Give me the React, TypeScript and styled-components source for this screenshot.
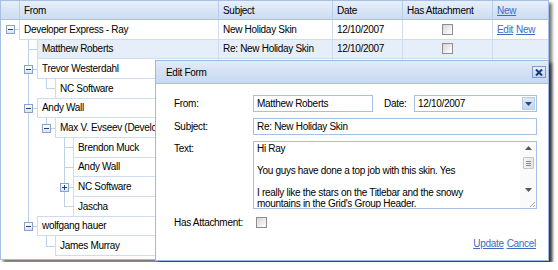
import React from "react";
import styled, { createGlobalStyle } from "styled-components";

const GlobalStyle = createGlobalStyle`
  html, body {
    margin: 0;
    padding: 0;
    background: #fff;
  }
  body {
    font-family: "Liberation Sans", Arial, sans-serif;
    font-size: 10px;
    letter-spacing: -0.3px;
    color: #000;
  }
`;

const GRID = "#cfdcef";
const TREE_LINE = "#bfd0ea";
const LINK = "#3d6cc0";

const COLS = [18, 199, 114, 70, 90, 56];

type Piece = { up?: boolean; down?: boolean; right?: boolean; btn?: "minus" | "plus" };

interface NodeRow {
  name: string;
  indent: Piece[];
  subject?: string;
  date?: string;
  links?: boolean;
  selected?: boolean;
}

const rows: NodeRow[] = [
  { name: "Developer Express - Ray", subject: "New Holiday Skin", date: "12/10/2007", links: true, indent: [{ right: true, btn: "minus" }] },
  { name: "Matthew Roberts", subject: "Re: New Holiday Skin", date: "12/10/2007", selected: true, indent: [{}, { up: true, down: true, right: true }] },
  { name: "Trevor Westerdahl", indent: [{}, { up: true, down: true, right: true, btn: "minus" }] },
  { name: "NC Software", indent: [{}, { up: true, down: true }, { up: true, right: true }] },
  { name: "Andy Wall", indent: [{}, { up: true, down: true, right: true, btn: "minus" }] },
  { name: "Max V. Evseev (Developer Express)", indent: [{}, { up: true, down: true }, { up: true, right: true, btn: "minus" }] },
  { name: "Brendon Muck", indent: [{}, { up: true, down: true }, {}, { up: true, down: true, right: true }] },
  { name: "Andy Wall", indent: [{}, { up: true, down: true }, {}, { up: true, down: true, right: true }] },
  { name: "NC Software", indent: [{}, { up: true, down: true }, {}, { up: true, down: true, right: true, btn: "plus" }] },
  { name: "Jascha", indent: [{}, { up: true, down: true }, {}, { up: true, right: true }] },
  { name: "wolfgang hauer", indent: [{}, { up: true, right: true, btn: "minus" }] },
  { name: "James Murray", indent: [{}, {}, { up: true, right: true }] },
];

const memoLines = [
  "Hi Ray",
  "",
  "You guys have done a top job with this skin. Yes",
  "",
  "I really like the stars on the Titlebar and the snowy",
  "mountains in the Grid's Group Header.",
];

const Page = styled.div`
  position: relative;
  width: 549px;
  height: 262px;
`;

const TreeList = styled.div`
  box-sizing: border-box;
  width: 549px;
  padding-bottom: 3px;
  border: 1px solid #a7bfe3;
  background: #fff;
  box-shadow: 3px 3px 3px rgba(0, 0, 0, 0.55);
`;

const HeaderRow = styled.div`
  display: flex;
  height: 18px;
  background: linear-gradient(#e8eff9, #d9e5f5 50%, #cddcf2);
  border-bottom: 1px solid #a9c1e6;
`;

const HeadCell = styled.div<{ $w: number }>`
  box-sizing: border-box;
  flex: none;
  width: ${(p) => p.$w}px;
  padding: 0 4px;
  display: flex;
  align-items: center;
  border-left: 1px solid #b9cce9;
  &:first-child {
    border-left: none;
  }
`;

const Row = styled.div`
  display: flex;
  height: 19.67px;
`;

const seg = (x: string, y: string, w: string, h: string) =>
  `linear-gradient(${TREE_LINE}, ${TREE_LINE}) ${x} ${y} / ${w} ${h} no-repeat`;

const pieceBackground = (p: Piece) => {
  const parts: string[] = [];
  if (p.up && p.down) parts.push(seg("9px", "0", "1px", "100%"));
  else if (p.up) parts.push(seg("9px", "0", "1px", "50%"));
  else if (p.down) parts.push(seg("9px", "100%", "1px", "50%"));
  if (p.right) parts.push(seg("100%", "50%", "9px", "1px"));
  return parts.length ? parts.join(", ") : "none";
};

const Indent = styled.div<{ $p: Piece }>`
  flex: none;
  width: 18px;
  display: flex;
  align-items: center;
  background: ${(p) => pieceBackground(p.$p)};
`;

const Expander = styled.div<{ $plus?: boolean }>`
  box-sizing: border-box;
  width: 9px;
  height: 9px;
  margin-left: 5px;
  border: 1px solid #8aa2c9;
  background: ${(p) =>
    [
      "linear-gradient(#23447c, #23447c) center / 5px 1px no-repeat",
      p.$plus ? "linear-gradient(#23447c, #23447c) center / 1px 5px no-repeat" : "",
      "linear-gradient(#ffffff, #dbe4f3)",
    ]
      .filter(Boolean)
      .join(", ")};
`;

const Cell = styled.div<{ $w: number; $sel?: boolean; $top?: boolean; $center?: boolean }>`
  box-sizing: border-box;
  flex: none;
  width: ${(p) => p.$w}px;
  padding: 0 4px;
  display: flex;
  align-items: center;
  justify-content: ${(p) => (p.$center ? "center" : "flex-start")};
  white-space: nowrap;
  overflow: hidden;
  border-left: 1px solid ${GRID};
  border-bottom: 1px solid ${GRID};
  box-shadow: ${(p) => (p.$top ? `0 -1px 0 ${GRID}` : "none")};
  background: ${(p) => (p.$sel ? "#e6eef9" : "#fff")};
`;

const CheckBox = styled.span`
  box-sizing: border-box;
  display: inline-block;
  width: 11px;
  height: 11px;
  border: 1px solid #8e8e8e;
  background: linear-gradient(135deg, #d4d4d4, #f4f4f4 70%, #fff);
`;

const Link = styled.a`
  color: ${LINK};
  text-decoration: underline;
  cursor: pointer;
  & + & {
    margin-left: 3px;
  }
`;

const Dialog = styled.div`
  position: absolute;
  left: 155px;
  top: 60px;
  width: 394px;
  height: 201px;
  box-sizing: border-box;
  border: 1px solid #9db8e3;
  background: #fff;
  box-shadow: 3px 3px 3px rgba(0, 0, 0, 0.55);
  display: flex;
  flex-direction: column;
`;

const DialogHeader = styled.div`
  flex: none;
  height: 22px;
  padding: 0 2px 0 10px;
  display: flex;
  align-items: center;
  justify-content: space-between;
  background: linear-gradient(#e2ebf8, #d3e1f4 50%, #c6d8f1);
  border-bottom: 1px solid #a9c3e8;
`;

const CloseButton = styled.div`
  box-sizing: border-box;
  width: 14px;
  height: 12px;
  border: 1px solid #7f9dcf;
  background: linear-gradient(#e6eefa, #c3d5f0);
  display: flex;
  align-items: center;
  justify-content: center;
`;

const DialogBody = styled.div`
  flex: 1;
  padding: 11px 11px 0 18px;
  display: flex;
  flex-direction: column;
`;

const FormRow = styled.div<{ $gap?: number; $top?: boolean }>`
  display: flex;
  align-items: ${(p) => (p.$top ? "flex-start" : "center")};
  margin-top: ${(p) => p.$gap ?? 0}px;
`;

const Label = styled.div<{ $w: number; $pad?: number }>`
  flex: none;
  width: ${(p) => p.$w}px;
  padding-top: ${(p) => p.$pad ?? 0}px;
`;

const DateLabel = styled.div`
  flex: none;
  width: 30px;
  margin-left: 11px;
`;

const TextBox = styled.input<{ $w?: number }>`
  box-sizing: border-box;
  flex: ${(p) => (p.$w ? "none" : "1")};
  width: ${(p) => (p.$w ? `${p.$w}px` : "auto")};
  min-width: 0;
  height: 17px;
  margin: 0;
  padding: 0 3px;
  border: 1px solid #a6bfe5;
  font: inherit;
  letter-spacing: inherit;
  color: #000;
  background: #fff;
  outline: none;
`;

const Combo = styled.div`
  box-sizing: border-box;
  flex: 1;
  height: 17px;
  display: flex;
  align-items: center;
  border: 1px solid #a6bfe5;
  padding-left: 3px;
`;

const ComboText = styled.span`
  flex: 1;
`;

const DropButton = styled.div`
  box-sizing: border-box;
  width: 13px;
  height: 13px;
  margin-right: 1px;
  background: linear-gradient(#dfe9f7, #c4d6f0);
  border: 1px solid #b8cdeb;
  display: flex;
  align-items: center;
  justify-content: center;
`;

const Memo = styled.div`
  box-sizing: border-box;
  flex: 1;
  height: 68px;
  display: flex;
  border: 1px solid #a6bfe5;
`;

const MemoText = styled.div`
  flex: 1;
  padding: 1px 4px 0 3px;
  line-height: 11px;
  white-space: pre;
  overflow: hidden;
`;

const ScrollBar = styled.div`
  flex: none;
  width: 16px;
  display: flex;
  flex-direction: column;
  align-items: center;
  background: #fafafa;
`;

const ScrollArrow = styled.div`
  height: 12px;
  display: flex;
  align-items: center;
  justify-content: center;
`;

const Thumb = styled.div`
  box-sizing: border-box;
  width: 11px;
  height: 12px;
  margin-top: 3px;
  border: 1px solid #c4c4c4;
  border-radius: 1px;
  background: linear-gradient(90deg, #f4f4f4, #e6e6e6);
  display: flex;
  align-items: center;
  justify-content: center;
`;

const Track = styled.div`
  flex: 1;
`;

const Grip = styled.div`
  height: 12px;
  width: 100%;
  display: flex;
  align-items: flex-end;
  justify-content: flex-end;
`;

const Actions = styled.div`
  display: flex;
  justify-content: flex-end;
  margin-top: 10px;
  padding-right: 1px;
`;

function TriangleUp() {
  return (
    <svg width="7" height="4" viewBox="0 0 7 4">
      <path d="M0 4 L3.5 0 L7 4 Z" fill="#555" />
    </svg>
  );
}

function TriangleDown({ color = "#555" }: { color?: string }) {
  return (
    <svg width="7" height="4" viewBox="0 0 7 4">
      <path d="M0 0 L7 0 L3.5 4 Z" fill={color} />
    </svg>
  );
}

export default function App() {
  return (
    <>
      <GlobalStyle />
      <Page>
        <TreeList>
          <HeaderRow>
            <HeadCell $w={COLS[0]} />
            <HeadCell $w={COLS[1]}>From</HeadCell>
            <HeadCell $w={COLS[2]}>Subject</HeadCell>
            <HeadCell $w={COLS[3]}>Date</HeadCell>
            <HeadCell $w={COLS[4]}>Has Attachment</HeadCell>
            <HeadCell $w={COLS[5]}>
              <Link>New</Link>
            </HeadCell>
          </HeaderRow>
          {rows.map((row, i) => {
            const level = row.indent.length - 1;
            const top = i > 0;
            return (
              <Row key={i}>
                {row.indent.map((piece, j) => (
                  <Indent key={j} $p={piece}>
                    {piece.btn && <Expander $plus={piece.btn === "plus"} />}
                  </Indent>
                ))}
                <Cell $w={COLS[1] - 18 * level} $sel={row.selected} $top={top}>
                  {row.name}
                </Cell>
                <Cell $w={COLS[2]} $sel={row.selected} $top={top}>
                  {row.subject}
                </Cell>
                <Cell $w={COLS[3]} $sel={row.selected} $top={top}>
                  {row.date}
                </Cell>
                <Cell $w={COLS[4]} $sel={row.selected} $top={top} $center>
                  <CheckBox />
                </Cell>
                <Cell $w={COLS[5]} $sel={row.selected} $top={top}>
                  {row.links && (
                    <>
                      <Link>Edit</Link>
                      <Link>New</Link>
                    </>
                  )}
                </Cell>
              </Row>
            );
          })}
        </TreeList>

        <Dialog>
          <DialogHeader>
            <span>Edit Form</span>
            <CloseButton>
              <svg width="8" height="7" viewBox="0 0 8 7">
                <path d="M1 0.5 L7 6.5 M7 0.5 L1 6.5" stroke="#163a7c" strokeWidth="2" />
              </svg>
            </CloseButton>
          </DialogHeader>
          <DialogBody>
            <FormRow>
              <Label $w={79}>From:</Label>
              <TextBox $w={120} readOnly defaultValue="Matthew Roberts" />
              <DateLabel>Date:</DateLabel>
              <Combo>
                <ComboText>12/10/2007</ComboText>
                <DropButton>
                  <TriangleDown color="#2b4a7f" />
                </DropButton>
              </Combo>
            </FormRow>
            <FormRow $gap={6}>
              <Label $w={79}>Subject:</Label>
              <TextBox readOnly defaultValue="Re: New Holiday Skin" />
            </FormRow>
            <FormRow $gap={6} $top>
              <Label $w={79} $pad={2}>
                Text:
              </Label>
              <Memo>
                <MemoText>{memoLines.join("\n")}</MemoText>
                <ScrollBar>
                  <ScrollArrow>
                    <TriangleUp />
                  </ScrollArrow>
                  <Thumb>
                    <svg width="5" height="5" viewBox="0 0 5 5">
                      <path d="M0 0.5 H5 M0 2.5 H5 M0 4.5 H5" stroke="#8a8a8a" strokeWidth="1" />
                    </svg>
                  </Thumb>
                  <Track />
                  <ScrollArrow>
                    <TriangleDown />
                  </ScrollArrow>
                  <Grip>
                    <svg width="8" height="8" viewBox="0 0 8 8">
                      <path d="M7 2 L2 7 M7 5 L5 7" stroke="#a0a0a0" strokeWidth="1" />
                    </svg>
                  </Grip>
                </ScrollBar>
              </Memo>
            </FormRow>
            <FormRow $gap={8}>
              <Label $w={82}>Has Attachment:</Label>
              <CheckBox />
            </FormRow>
            <Actions>
              <Link>Update</Link>
              <Link>Cancel</Link>
            </Actions>
          </DialogBody>
        </Dialog>
      </Page>
    </>
  );
}
